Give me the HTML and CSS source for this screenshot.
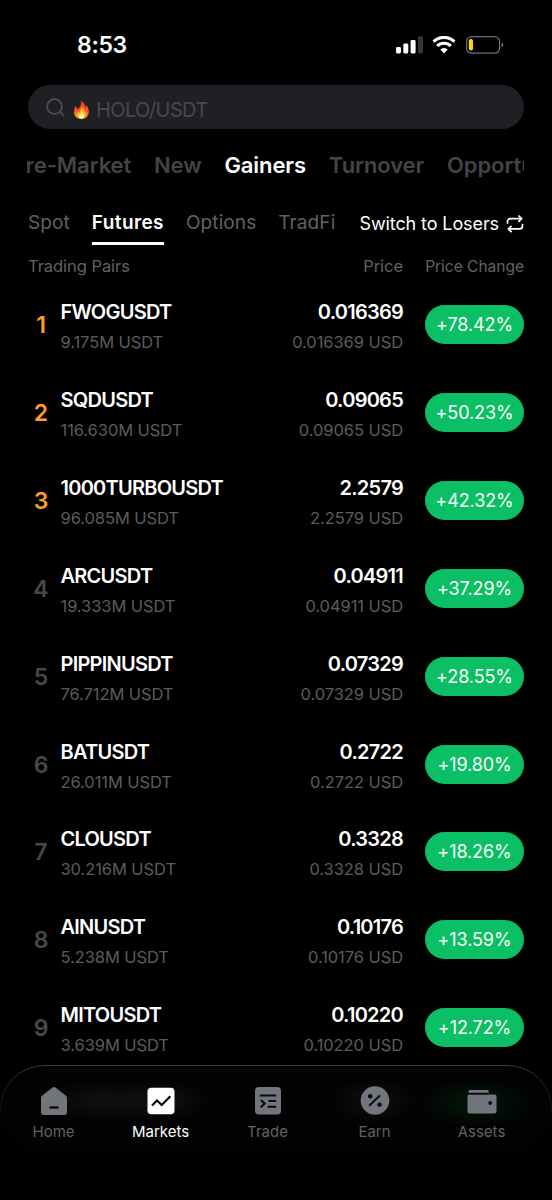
FILE: index.html
```html
<!DOCTYPE html>
<html lang="en">
<head>
    <meta charset="UTF-8">
    <meta name="viewport" content="width=device-width, initial-scale=1.0">
    <title>Markets</title>
    <link rel="stylesheet" href="styles.css">
</head>
<body>
<div class="app">
    <header class="status-bar">
        <span class="time">8:53</span>
        <div class="status-icons">
            <svg width="28" height="18" viewBox="0 0 28 18" fill="#fff">
                <rect x="0" y="11" width="5" height="6.5" rx="1.4"/>
                <rect x="7.3" y="7.6" width="5" height="9.9" rx="1.4"/>
                <rect x="14.6" y="4" width="5" height="13.5" rx="1.4"/>
                <rect x="22" y="0.3" width="5" height="17.2" rx="1.4" fill="#353535"/>
            </svg>
            <svg class="wifi" width="24" height="18" viewBox="0 0 24 18" fill="none" stroke="#fff" stroke-width="3.1">
                <path d="M1.6 5.6a15 15 0 0 1 20.8 0"/>
                <path d="M5.2 10a9.8 9.8 0 0 1 13.6 0"/>
                <path d="M12 17.4l-3.7-3.8a5.3 5.3 0 0 1 7.4 0z" fill="#fff" stroke="none"/>
            </svg>
            <svg class="battery" width="38" height="18" viewBox="0 0 38 18" fill="none">
                <rect x="0.6" y="0.6" width="33" height="16.6" rx="5" stroke="#6f6f6f" stroke-width="1.2"/>
                <rect x="2.8" y="3" width="4.2" height="11.4" rx="2" fill="#ffd60a"/>
                <path d="M35.6 6.4c2.2.9 2.2 4 0 5z" fill="#777"/>
            </svg>
        </div>
    </header>

    <div class="search">
        <svg width="19" height="19" viewBox="0 0 20 20" fill="none" stroke="#4d4e52" stroke-width="1.9" stroke-linecap="round">
            <circle cx="9" cy="9" r="7.8"/>
            <path d="M14.7 14.7l3.9 3.9"/>
        </svg>
        <svg class="flame" width="17" height="20" viewBox="0 0 18 20">
            <defs>
                <linearGradient id="fire" x1="0" y1="0" x2="0" y2="1">
                    <stop offset="0" stop-color="#e8402a"/>
                    <stop offset="0.55" stop-color="#ff5a1f"/>
                    <stop offset="1" stop-color="#ff9d1c"/>
                </linearGradient>
            </defs>
            <path d="M8.2 0.4c4 2 5.4 4.6 4.8 7.2 1-.6 1.3-1.6 1.2-2.8 2 2.4 2.9 5.2 2.5 8.2-.5 4-3.7 6.5-7.7 6.5S1.4 17 1.1 13.1C.9 10.4 2.2 8.2 2.4 5.6c1.3 1 1.9 2.4 1.9 3.9C7.3 7.4 9.4 4.2 8.2.4z" fill="url(#fire)"/>
            <path d="M9.6 6.6c.3 3 3.7 3.9 4.1 7.7.3 3-1.9 5-4.7 5s-5-1.8-4.9-4.7c0-1.5.8-2.5 1.5-3.2.3 1.2.8 1.6 1.3 1.7.2-2.6 2.4-3.5 2.7-6.5z" fill="#ffb52b"/>
            <path d="M9.3 11.5c.3 1.5 2.5 2.5 2.5 4.7 0 1.9-1.2 3-2.8 3s-3-1-3-2.9c0-1 .3-1.6.8-2.2.4.7.8.9 1.2.9.1-1.4 1-2.2 1.3-3.5z" fill="#fff3a0"/>
        </svg>
        <span class="search-text">HOLO/USDT</span>
    </div>

    <nav class="categories">
        <span class="cut-start">Pre-Market</span>
        <span>New</span>
        <span class="active">Gainers</span>
        <span>Turnover</span>
        <span>Opportunities</span>
    </nav>

    <nav class="tabs">
        <span class="tab">Spot</span>
        <span class="tab active">Futures</span>
        <span class="tab">Options</span>
        <span class="tab">TradFi</span>
        <span class="switch">Switch to Losers
            <svg width="18" height="18" viewBox="0 0 18 18" fill="none" stroke="#fff" stroke-width="1.7" stroke-linecap="round" stroke-linejoin="round">
                <path d="M1.5 8V6.5a2.8 2.8 0 0 1 2.8-2.8H15.5M12.9 1l2.7 2.7-2.7 2.6"/>
                <path d="M16.5 9.5V11a2.8 2.8 0 0 1-2.8 2.8H2.5M5.1 16.7l-2.7-2.9 2.7-2.5"/>
            </svg>
        </span>
    </nav>

    <div class="list-head">
        <span>Trading Pairs</span>
        <span class="head-price">Price</span>
        <span class="head-change">Price Change</span>
    </div>

    <main class="list">
        <div class="row">
            <span class="rank top">1</span>
            <div class="pair"><b>FWOGUSDT</b><small>9.175M USDT</small></div>
            <div class="price"><b>0.016369</b><small>0.016369 USD</small></div>
            <span class="change">+78.42%</span>
        </div>
        <div class="row">
            <span class="rank top">2</span>
            <div class="pair"><b>SQDUSDT</b><small>116.630M USDT</small></div>
            <div class="price"><b>0.09065</b><small>0.09065 USD</small></div>
            <span class="change">+50.23%</span>
        </div>
        <div class="row">
            <span class="rank top">3</span>
            <div class="pair"><b>1000TURBOUSDT</b><small>96.085M USDT</small></div>
            <div class="price"><b>2.2579</b><small>2.2579 USD</small></div>
            <span class="change">+42.32%</span>
        </div>
        <div class="row">
            <span class="rank">4</span>
            <div class="pair"><b>ARCUSDT</b><small>19.333M USDT</small></div>
            <div class="price"><b>0.04911</b><small>0.04911 USD</small></div>
            <span class="change">+37.29%</span>
        </div>
        <div class="row">
            <span class="rank">5</span>
            <div class="pair"><b>PIPPINUSDT</b><small>76.712M USDT</small></div>
            <div class="price"><b>0.07329</b><small>0.07329 USD</small></div>
            <span class="change">+28.55%</span>
        </div>
        <div class="row">
            <span class="rank">6</span>
            <div class="pair"><b>BATUSDT</b><small>26.011M USDT</small></div>
            <div class="price"><b>0.2722</b><small>0.2722 USD</small></div>
            <span class="change">+19.80%</span>
        </div>
        <div class="row">
            <span class="rank">7</span>
            <div class="pair"><b>CLOUSDT</b><small>30.216M USDT</small></div>
            <div class="price"><b>0.3328</b><small>0.3328 USD</small></div>
            <span class="change">+18.26%</span>
        </div>
        <div class="row">
            <span class="rank">8</span>
            <div class="pair"><b>AINUSDT</b><small>5.238M USDT</small></div>
            <div class="price"><b>0.10176</b><small>0.10176 USD</small></div>
            <span class="change">+13.59%</span>
        </div>
        <div class="row">
            <span class="rank">9</span>
            <div class="pair"><b>MITOUSDT</b><small>3.639M USDT</small></div>
            <div class="price"><b>0.10220</b><small>0.10220 USD</small></div>
            <span class="change">+12.72%</span>
        </div>
    </main>

    <footer class="bottom-nav">
        <div class="nav-item">
            <svg width="30" height="30" viewBox="0 0 30 30">
                <path d="M13.5 1.6a2.3 2.3 0 0 1 3 0L26.7 9.5a3 3 0 0 1 1.3 2.4V26a3 3 0 0 1-3 3H5a3 3 0 0 1-3-3V11.9a3 3 0 0 1 1.3-2.4z" fill="#73757c"/>
                <path d="M10.5 21.5h9" stroke="#08080a" stroke-width="2.3"/>
            </svg>
            <span>Home</span>
        </div>
        <div class="nav-item active">
            <svg width="30" height="30" viewBox="0 0 30 30">
                <rect x="1.5" y="1.8" width="27" height="26.5" rx="3.8" fill="#fff"/>
                <path d="M6 19.5l5-5 4.7 4.5 8.6-8.8" fill="none" stroke="#000" stroke-width="2"/>
            </svg>
            <span>Markets</span>
        </div>
        <div class="nav-item">
            <svg width="30" height="30" viewBox="0 0 30 30">
                <rect x="2" y="1" width="26" height="27.5" rx="3.8" fill="#73757c"/>
                <path d="M6.8 9.5h16.4M15.5 15h7.7M14.7 20.8h8.5M7.8 14l3.9 3.6-3.9 3.7" fill="none" stroke="#08080a" stroke-width="2"/>
            </svg>
            <span>Trade</span>
        </div>
        <div class="nav-item">
            <svg width="30" height="30" viewBox="0 0 30 30">
                <circle cx="15" cy="14.5" r="14.3" fill="#73757c"/>
                <path d="M9.2 19.8L20 9.4" stroke="#08080a" stroke-width="2"/>
                <circle cx="10.2" cy="10.3" r="2.2" fill="#08080a"/>
                <circle cx="19.6" cy="18.6" r="2.2" fill="#08080a"/>
            </svg>
            <span>Earn</span>
        </div>
        <div class="nav-item">
            <svg width="30" height="30" viewBox="0 0 30 30">
                <path d="M2.6 4h18a1 1 0 0 1 1 1v2.5h-20V5a1 1 0 0 1 1-1zM2 8.5h26a1.5 1.5 0 0 1 1.5 1.5v15.5a2 2 0 0 1-2 2h-25a2 2 0 0 1-2-2V10A1.5 1.5 0 0 1 2 8.5z" fill="#73757c"/>
                <path d="M1.6 7.6h20" stroke="#08080a" stroke-width="1.6"/>
                <circle cx="23.2" cy="17" r="1.9" fill="#08080a"/>
            </svg>
            <span>Assets</span>
        </div>
    </footer>
</div>
</body>
</html>
```

FILE: styles.css
```css
* { box-sizing: border-box; }
body { margin: 0; background: #000; color: #fff; font-family: Inter, "Liberation Sans", sans-serif; overflow: hidden; }
.app { width: 552px; height: 1200px; overflow: hidden; position: relative; }

.status-bar { height: 85px; padding: 32px 48px 0 77px; display: flex; justify-content: space-between; align-items: flex-start; }
.time { font-size: 23px; line-height: 26px; font-weight: 600; letter-spacing: -0.3px; }
.status-icons { display: flex; padding-top: 4px; }
.status-icons svg { display: block; }
.wifi { margin-left: 8px; }
.battery { margin-left: 10px; }

.search { height: 44px; margin: 0 28px; padding: 0 17.5px; border-radius: 22px; background: #1f2024; display: flex; align-items: center; }
.search svg { flex: none; }
.search .flame { margin: 5px 0 0 8px; }
.search-text { margin: 5px 0 0 6.5px; font-size: 20px; line-height: 24px; letter-spacing: -0.6px; color: #47484c; }

.categories { height: 66px; margin: 6px 28px 0 27px; display: flex; align-items: center; gap: 22.8px; overflow: hidden; white-space: nowrap; font-size: 22px; line-height: 30px; letter-spacing: -0.08px; font-weight: 600; color: #434446; padding-bottom: 6px; }
.categories .active { color: #fff; }
.cut-start { margin-left: -15.5px; }

.tabs { height: 45px; margin: 1px 28px 0; display: flex; align-items: flex-start; gap: 22px; font-size: 19px; line-height: 24px; letter-spacing: 0.1px; color: #606164; white-space: nowrap; padding-top: 9px; }
.tab { height: 34px; }
.tab.active { color: #fff; font-weight: 600; letter-spacing: 0.4px; border-bottom: 3px solid #fff; }
.switch { margin-left: auto; display: flex; align-items: center; gap: 7px; color: #fff; font-size: 18px; line-height: 26px; letter-spacing: -0.1px; }

.list-head { height: 36px; margin: 0 28px; padding-top: 2px; display: flex; align-items: center; font-size: 16.5px; line-height: 20px; letter-spacing: -0.05px; color: #606164; }
.head-price { margin-left: auto; }
.head-change { width: 99px; margin-left: 22px; padding-top: 1px; text-align: right; white-space: nowrap; font-size: 15.6px; }

.list { margin-top: -2px; }
.row { height: 87.83px; margin: 0 28px; display: flex; align-items: center; }
.rank { width: 26px; text-align: center; font-size: 23px; line-height: 28px; font-weight: 600; color: #47484c; padding-top: 1px; }
.rank.top { color: #ff9c2e; }
.pair { margin-left: 6.5px; padding-top: 4px; }
.price { margin-left: auto; text-align: right; padding-top: 4px; }
.row b, .row small { display: block; white-space: nowrap; }
.row b { font-size: 20px; line-height: 26px; font-weight: 600; letter-spacing: -0.75px; }
.row small { margin-top: 6px; font-size: 16.5px; line-height: 23px; letter-spacing: -0.08px; color: #5b5c5f; }
.change { width: 99px; height: 39px; margin-left: 22px; border-radius: 20px; background: #0abf64; font-size: 18px; line-height: 39px; letter-spacing: -0.1px; text-align: center; }

.bottom-nav {
  position: absolute; left: 0; right: 0; top: 1065px; height: 89px; padding: 21px 17px 0 0; display: flex; border-radius: 44px;
  background:
    radial-gradient(ellipse 70px 22px at 105px 36px, #111, transparent),
    radial-gradient(ellipse 50px 22px at 160px 36px, #111, transparent),
    radial-gradient(ellipse 45px 24px at 373px 36px, #101010, transparent),
    radial-gradient(ellipse 58px 26px at 475px 38px, #001a0b, transparent),
    #020202;
}
.bottom-nav::before { content: ""; position: absolute; inset: 0; border: 1px solid #3c3c3c; border-radius: 44px; -webkit-mask: linear-gradient(#000, transparent 70%); mask: linear-gradient(#000, transparent 70%); }
.nav-item { flex: 1; display: flex; flex-direction: column; align-items: center; font-size: 15px; line-height: 20px; color: #606164; }
.nav-item.active { color: #fff; }
.nav-item svg { display: block; margin-bottom: 6px; }
```
